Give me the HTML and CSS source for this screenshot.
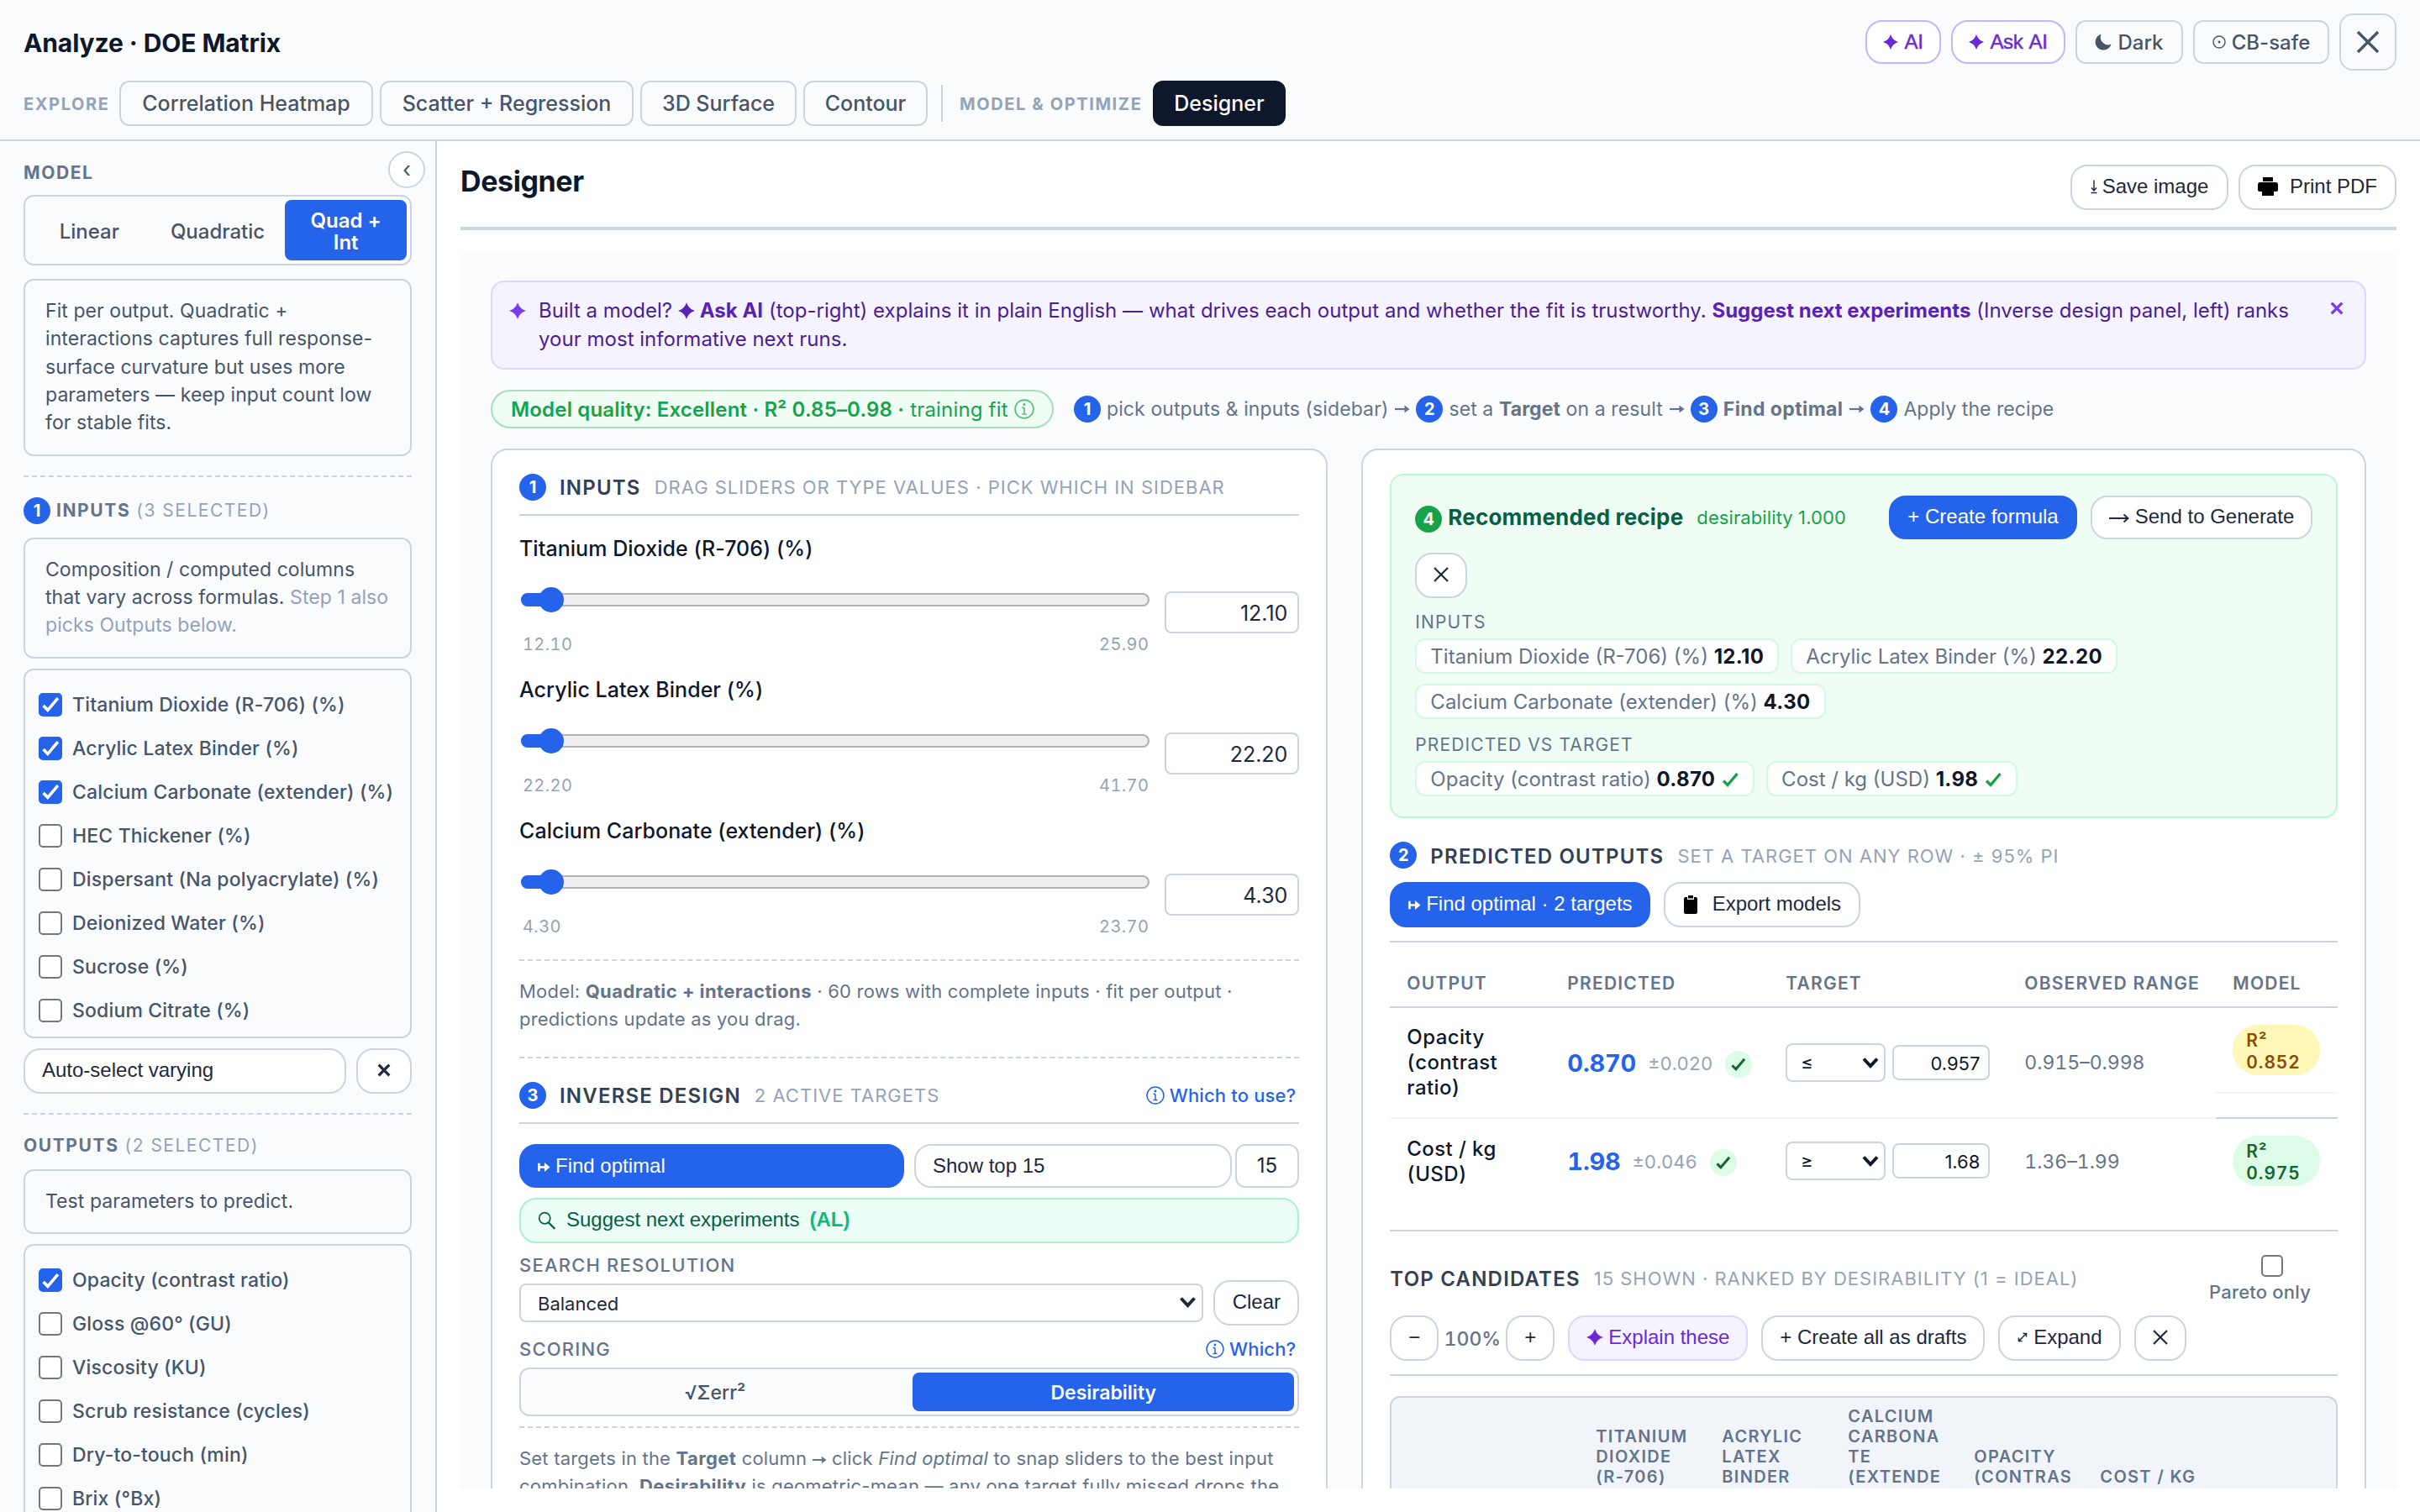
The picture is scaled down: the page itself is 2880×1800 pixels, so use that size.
FILE: index.html
```html
<!DOCTYPE html>
<html lang="en">
<head>
  <meta charset="UTF-8">
  <meta name="viewport" content="width=device-width, initial-scale=1.0">
  <title>Analyze · DOE Matrix</title>
  <link rel="stylesheet" href="styles.css">
</head>
<body>
  <svg class="defs" width="0" height="0">
    <symbol id="star" viewBox="0 0 20 20"><path d="M10 0C11.600 5 14.800 8.400 20 10C14.800 11.600 11.600 15 10 20C8.400 15 5.200 11.600 0 10C5.200 8.400 8.400 5 10 0Z" fill="currentColor"/></symbol>
    <symbol id="cross" viewBox="0 0 20 20"><path d="M2 2L18 18M18 2L2 18" stroke="currentColor" stroke-width="2.200" fill="none"/></symbol>
    <symbol id="cross-bold" viewBox="0 0 20 20"><path d="M3 3L17 17M17 3L3 17" stroke="currentColor" stroke-width="3.600" fill="none"/></symbol>
    <symbol id="moon" viewBox="0 0 20 20"><path d="M7.500 0.800A9.600 9.600 0 1 0 19.500 12.500A9 9 0 0 1 7.500 0.800Z" fill="currentColor"/></symbol>
    <symbol id="dot" viewBox="0 0 20 20"><circle cx="10" cy="10" r="8.800" fill="none" stroke="currentColor" stroke-width="1.800"/><circle cx="10" cy="10" r="1.800" fill="currentColor"/></symbol>
    <symbol id="info" viewBox="0 0 22 22"><circle cx="11" cy="11" r="10" fill="none" stroke="currentColor" stroke-width="1.500"/><path d="M11 9.500V16.500M8.500 9.500H11M8.500 16.500H13.500" stroke="currentColor" stroke-width="1.500" fill="none"/><circle cx="11" cy="6" r="1.400" fill="currentColor"/></symbol>
    <symbol id="arrow" viewBox="0 0 18 12"><path d="M0 6H13" stroke="currentColor" stroke-width="2.200"/><path d="M11.500 1.500L17.500 6L11.500 10.500Z" fill="currentColor"/></symbol>
    <symbol id="arrow-thin" viewBox="0 0 24 14"><path d="M0 7H22M17.500 2.500L22.500 7L17.500 11.500" stroke="currentColor" stroke-width="1.900" fill="none"/></symbol>
    <symbol id="mapsto" viewBox="0 0 16 14"><path d="M1.500 2V12M1.500 7H11" stroke="currentColor" stroke-width="2.800"/><path d="M8.500 1L15.500 7L8.500 13Z" fill="currentColor"/></symbol>
    <symbol id="down" viewBox="0 0 8 16"><path d="M4 0V12M1 9L4 12.500L7 9M0.500 15H7.500" stroke="currentColor" stroke-width="1.400" fill="none"/></symbol>
    <symbol id="printer" viewBox="0 0 24 22"><path d="M6 0H18V5H6ZM3 6H21Q24 6 24 9V15Q24 17 22 17H19V22H5V17H2Q0 17 0 15V9Q0 6 3 6Z" fill="#000"/></symbol>
    <symbol id="clipboard" viewBox="0 0 16 22"><path d="M2 2H4V5H12V2H14Q16 2 16 4V20Q16 22 14 22H2Q0 22 0 20V4Q0 2 2 2ZM5 0H11V3.500H5Z" fill="#000"/></symbol>
    <symbol id="lens" viewBox="0 0 20 20"><circle cx="7.500" cy="7.500" r="6" fill="none" stroke="currentColor" stroke-width="1.500"/><path d="M11.500 12L18.500 19" stroke="currentColor" stroke-width="2"/></symbol>
    <symbol id="chev" viewBox="0 0 20 14"><path d="M2 2.500L10 11L18 2.500" stroke="currentColor" stroke-width="4" fill="none"/></symbol>
    <symbol id="check" viewBox="0 0 20 18"><path d="M1.500 10.500L6.500 15.500L18 2" stroke="currentColor" stroke-width="3.400" fill="none"/></symbol>
    <symbol id="expand" viewBox="0 0 12 12"><path d="M2 10L10 2M6.500 1.500H10.500V5.500M1.500 6.500V10.500H5.500" stroke="currentColor" stroke-width="1.500" fill="none"/></symbol>
  </svg>

  <header class="header">
    <div class="header-top">
      <h1>Analyze · DOE Matrix</h1>
      <div class="header-actions">
        <button class="ai ai-short"><svg><use href="#star"/></svg>AI</button>
        <button class="ai ai-ask"><svg><use href="#star"/></svg>Ask AI</button>
        <button class="tool tool-dark"><svg class="moon"><use href="#moon"/></svg>Dark</button>
        <button class="tool tool-cb"><svg class="dot"><use href="#dot"/></svg>CB-safe</button>
        <button class="close"><svg><use href="#cross"/></svg></button>
      </div>
    </div>
    <nav class="tabs">
      <span class="group g1">Explore</span>
      <button class="tab t1">Correlation Heatmap</button>
      <button class="tab t2">Scatter + Regression</button>
      <button class="tab t3">3D Surface</button>
      <button class="tab t4">Contour</button>
      <span class="sep"></span>
      <span class="group g2">Model &amp; Optimize</span>
      <button class="tab t5 active">Designer</button>
    </nav>
  </header>

  <div class="layout">
    <aside class="sidebar">
      <button class="collapse">‹</button>
      <div class="side-title model-title">Model</div>
      <div class="seg seg-model">
        <span>Linear</span>
        <span>Quadratic</span>
        <span class="on">Quad +<br>Int</span>
      </div>
      <div class="hint">Fit per output. Quadratic +<br>interactions captures full response-<br>surface curvature but uses more<br>parameters — keep input count low<br>for stable fits.</div>
      <hr class="dash">
      <div class="side-title side-inputs"><i class="num">1</i>Inputs <small>(3 selected)</small></div>
      <div class="hint">Composition / computed columns<br>that vary across formulas. <em>Step 1 also<br>picks Outputs below.</em></div>
      <div class="checks">
        <label><i class="cb on"><svg><use href="#check"/></svg></i>Titanium Dioxide (R-706) (%)</label>
        <label><i class="cb on"><svg><use href="#check"/></svg></i>Acrylic Latex Binder (%)</label>
        <label><i class="cb on"><svg><use href="#check"/></svg></i>Calcium Carbonate (extender) (%)</label>
        <label><i class="cb"></i>HEC Thickener (%)</label>
        <label><i class="cb"></i>Dispersant (Na polyacrylate) (%)</label>
        <label><i class="cb"></i>Deionized Water (%)</label>
        <label><i class="cb"></i>Sucrose (%)</label>
        <label><i class="cb"></i>Sodium Citrate (%)</label>
      </div>
      <div class="side-row">
        <button class="btn auto">Auto-select varying</button>
        <button class="btn x"><svg class="x14"><use href="#cross-bold"/></svg></button>
      </div>
      <hr class="dash">
      <div class="side-title side-outputs">Outputs <small>(2 selected)</small></div>
      <div class="hint">Test parameters to predict.</div>
      <div class="checks">
        <label><i class="cb on"><svg><use href="#check"/></svg></i>Opacity (contrast ratio)</label>
        <label><i class="cb"></i>Gloss @60° (GU)</label>
        <label><i class="cb"></i>Viscosity (KU)</label>
        <label><i class="cb"></i>Scrub resistance (cycles)</label>
        <label><i class="cb"></i>Dry-to-touch (min)</label>
        <label><i class="cb"></i>Brix (°Bx)</label>
      </div>
    </aside>

    <main class="main">
      <div class="main-head">
        <h2>Designer</h2>
        <div class="main-actions">
          <button class="btn save"><svg class="down"><use href="#down"/></svg>Save image</button>
          <button class="btn print"><svg class="printer"><use href="#printer"/></svg>Print PDF</button>
        </div>
      </div>

      <div class="panel">
        <div class="banner">
          <svg class="star"><use href="#star"/></svg>
          <p>Built a model? <b><svg><use href="#star"/></svg> Ask AI</b> (top-right) explains it in plain English — what drives each output and whether the fit is trustworthy. <b>Suggest next experiments</b> (Inverse design panel, left) ranks<br>your most informative next runs.</p>
          <svg class="dismiss"><use href="#cross-bold"/></svg>
        </div>

        <div class="status">
          <span class="quality"><b>Model quality: Excellent · R² 0.85–0.98 ·</b> training fit <svg><use href="#info"/></svg></span>
          <span class="steps">
            <i class="num">1</i><span>pick outputs &amp; inputs (sidebar)</span><svg><use href="#arrow"/></svg>
            <i class="num">2</i><span>set a <b>Target</b> on a result</span><svg><use href="#arrow"/></svg>
            <i class="num">3</i><b class="find-step">Find optimal</b><svg><use href="#arrow"/></svg>
            <i class="num">4</i><span class="last">Apply the recipe</span>
          </span>
        </div>

        <div class="cards">
          <section class="card">
            <div class="sec-head">
              <i class="num">1</i><h3>Inputs</h3><span class="sub">Drag sliders or type values · Pick which in sidebar</span>
            </div>
            <div class="slider">
              <div class="name">Titanium Dioxide (R-706) (%)</div>
              <div class="slide-row">
                <div class="range"><div class="track"><span class="fill"></span><span class="thumb"></span></div><div class="ends"><span>12.10</span><span>25.90</span></div></div>
                <div class="value">12.10</div>
              </div>
            </div>
            <div class="slider">
              <div class="name">Acrylic Latex Binder (%)</div>
              <div class="slide-row">
                <div class="range"><div class="track"><span class="fill"></span><span class="thumb"></span></div><div class="ends"><span>22.20</span><span>41.70</span></div></div>
                <div class="value">22.20</div>
              </div>
            </div>
            <div class="slider">
              <div class="name">Calcium Carbonate (extender) (%)</div>
              <div class="slide-row">
                <div class="range"><div class="track"><span class="fill"></span><span class="thumb"></span></div><div class="ends"><span>4.30</span><span>23.70</span></div></div>
                <div class="value">4.30</div>
              </div>
            </div>
            <p class="note note-model">Model: <b>Quadratic + interactions</b> · 60 rows with complete inputs · fit per output ·<br>predictions update as you drag.</p>

            <div class="sec-head inverse">
              <i class="num">3</i><h3>Inverse design</h3><span class="sub">2 active targets</span>
              <a class="which"><svg><use href="#info"/></svg>Which to use?</a>
            </div>
            <div class="opt-row">
              <button class="btn primary find"><svg class="mapsto"><use href="#mapsto"/></svg>Find optimal</button>
              <button class="btn show">Show top 15</button>
              <div class="count">15</div>
            </div>
            <button class="btn suggest"><svg class="lens"><use href="#lens"/></svg>Suggest next experiments <b>(AL)</b></button>
            <div class="field-label search-label">Search resolution</div>
            <div class="res-row">
              <div class="select">Balanced<svg><use href="#chev"/></svg></div>
              <button class="btn clear">Clear</button>
            </div>
            <div class="field-label score-label">Scoring<a class="which"><svg><use href="#info"/></svg>Which?</a></div>
            <div class="seg seg-score"><span>√Σerr²</span><span class="on">Desirability</span></div>
            <p class="note note-last">Set targets in the <b>Target</b> column <svg><use href="#arrow"/></svg> click <em>Find optimal</em> to snap sliders to the best input<br>combination. <b>Desirability</b> is geometric-mean — any one target fully missed drops the</p>
          </section>

          <section class="card">
            <div class="recipe">
              <div class="recipe-head">
                <i class="num green">4</i><b class="rec">Recommended recipe</b><span class="des">desirability 1.000</span>
                <button class="btn primary create">+ Create formula</button>
                <button class="btn send"><svg class="arrow-thin"><use href="#arrow-thin"/></svg>Send to Generate</button>
              </div>
              <button class="btn x62"><svg class="x18"><use href="#cross"/></svg></button>
              <div class="mini mini-in">Inputs</div>
              <div class="chips">
                <span>Titanium Dioxide (R-706) (%) <b>12.10</b></span>
                <span>Acrylic Latex Binder (%) <b>22.20</b></span>
                <span>Calcium Carbonate (extender) (%) <b>4.30</b></span>
              </div>
              <div class="mini mini-pred">Predicted vs target</div>
              <div class="chips">
                <span>Opacity (contrast ratio) <b>0.870</b> <svg><use href="#check"/></svg></span>
                <span>Cost / kg (USD) <b>1.98</b> <svg><use href="#check"/></svg></span>
              </div>
            </div>

            <div class="pred-head">
              <div class="pred-title"><i class="num">2</i><h3>Predicted outputs</h3><span class="sub">Set a target on any row · ± 95% PI</span></div>
              <div class="pred-btns">
                <button class="btn primary find2"><svg class="mapsto"><use href="#mapsto"/></svg>Find optimal · 2 targets</button>
                <button class="btn export"><svg class="clipboard"><use href="#clipboard"/></svg>Export models</button>
              </div>
            </div>

            <table class="outputs">
              <colgroup><col class="c1"><col class="c2"><col class="c3"><col class="c4"><col class="c5"></colgroup>
              <tr><th>Output</th><th>Predicted</th><th>Target</th><th>Observed range</th><th>Model</th></tr>
              <tr class="r1">
                <td class="out">Opacity<br>(contrast<br>ratio)</td>
                <td><div class="pred"><b>0.870</b><span>±0.020</span><i><svg><use href="#check"/></svg></i></div></td>
                <td><div class="target"><span class="op">≤<svg><use href="#chev"/></svg></span><span class="tv">0.957</span></div></td>
                <td class="obs">0.915–0.998</td>
                <td class="mod"><div class="modcell"><span class="r2 yellow">R²<br>0.852</span></div></td>
              </tr>
              <tr class="r2row">
                <td class="out">Cost / kg<br>(USD)</td>
                <td><div class="pred"><b>1.98</b><span>±0.046</span><i><svg><use href="#check"/></svg></i></div></td>
                <td><div class="target"><span class="op">≥<svg><use href="#chev"/></svg></span><span class="tv">1.68</span></div></td>
                <td class="obs">1.36–1.99</td>
                <td class="mod"><div class="modcell"><span class="r2 lime">R²<br>0.975</span></div></td>
              </tr>
            </table>

            <div class="cand-head">
              <div class="cand-title">
                <h3>Top candidates</h3><span class="sub">15 shown · Ranked by desirability (1 = ideal)</span>
                <label class="pareto"><i class="cb"></i>Pareto only</label>
              </div>
              <div class="cand-btns">
                <button class="btn zoom">−</button>
                <span class="pct">100%</span>
                <button class="btn zoom plus">+</button>
                <button class="btn explain"><svg class="star"><use href="#star"/></svg>Explain these</button>
                <button class="btn drafts">+ Create all as drafts</button>
                <button class="btn exp"><svg class="expand"><use href="#expand"/></svg>Expand</button>
                <button class="btn x62"><svg class="x18"><use href="#cross"/></svg></button>
              </div>
            </div>
            <div class="cand-table">
              <span></span>
              <span>Titanium<br>Dioxide<br>(R-706)<br>(%)</span>
              <span>Acrylic<br>Latex<br>Binder<br>(%)</span>
              <span>Calcium<br>Carbona<br>te<br>(extende<br>r) (%)</span>
              <span>Opacity<br>(contras<br>t ratio)</span>
              <span>Cost / kg<br>(USD)</span>
            </div>
          </section>
        </div>
      </div>
    </main>
  </div>
</body>
</html>
```

FILE: styles.css
```css
* {
  box-sizing: border-box;
}
body, html {
  margin: 0;
  height: 1800px;
  overflow: hidden;
}
body {
  display: flex;
  flex-direction: column;
  background: #fff;
  color: #0f172a;
  font-family: Inter, "Liberation Sans", sans-serif;
  font-size: 24px;
}
h1, h2, h3, p {
  margin: 0;
}
button {
  font-family: inherit;
  padding: 0;
  margin: 0;
  white-space: nowrap;
}
i {
  font-style: normal;
}
svg {
  flex: none;
}
.defs {
  position: absolute;
}

/* header */
.header {
  height: 168px;
  background: #f9fbfd;
  border-bottom: 2px solid #cbd5e1;
  padding: 16px 28px 0;
}
.header-top {
  display: flex;
  align-items: center;
  justify-content: space-between;
  height: 68px;
}
h1 {
  padding-top: 2px;
  font-size: 30px;
  font-weight: 700;
  letter-spacing: -.1px;
}
.header-actions {
  display: flex;
  align-items: center;
  gap: 12px;
}
.header-actions button {
  display: flex;
  align-items: center;
  justify-content: center;
  gap: 7px;
  height: 52px;
  font-size: 24px;
  font-weight: 500;
  border: 2px solid #cbd5e1;
  border-radius: 12px;
  background: #f9fbfd;
  color: #475569;
}
.header-actions .ai {
  border-color: #c4b5fd;
  border-radius: 20px;
  background: #fff;
  color: #6d28d9;
  font-family: "Liberation Sans", Arial, sans-serif;
  font-size: 24px;
  letter-spacing: -.3px;
  word-spacing: 2px;
  padding-bottom: 1px;
  -webkit-text-stroke: .5px #6d28d9;
}
.ai svg {
  width: 18px;
  height: 18px;
}
.ai-short { width: 90px; }
.ai-ask { width: 136px; }
.tool-dark { width: 128px; }
.tool-cb { width: 162px; }
.moon {
  width: 20px;
  height: 20px;
}
.dot {
  width: 16px;
  height: 16px;
}
.header-actions .close {
  width: 68px;
  height: 68px;
  border-radius: 16px;
}
.close svg {
  width: 30px;
  height: 30px;
}

.tabs {
  display: flex;
  align-items: center;
  gap: 8px;
  height: 54px;
  margin-top: 12px;
}
.group {
  padding-top: 2px;
  font-size: 20px;
  font-weight: 700;
  letter-spacing: 1.6px;
  text-transform: uppercase;
  color: #94a3b8;
  white-space: nowrap;
}
.g1 { width: 106px; }
.g2 { width: 222px; }
.tab {
  height: 54px;
  border: 2px solid #cbd5e1;
  border-radius: 12px;
  background: #f9fbfd;
  color: #475569;
  font-size: 25px;
  font-weight: 500;
}
.tab.active {
  background: #0f172a;
  border-color: #0f172a;
  color: #fff;
}
.t1 { width: 302px; }
.t2 { width: 302px; }
.t3 { width: 186px; }
.t4 { width: 148px; }
.t5 { width: 158px; }
.sep {
  width: 2px;
  height: 44px;
  margin: 0 12px 0 8px;
  background: #cbd5e1;
}

/* shared bits */
.btn {
  display: flex;
  align-items: center;
  justify-content: center;
  height: 54px;
  padding-bottom: 2px;
  border: 2px solid #cbd5e1;
  border-radius: 20px;
  background: #fff;
  color: #1e293b;
  font-family: "Liberation Sans", Arial, sans-serif;
  font-size: 24px;
}
.btn.primary {
  background: #2563eb;
  border-color: #2563eb;
  color: #fff;
}
.num {
  display: inline-flex;
  align-items: center;
  justify-content: center;
  flex: none;
  width: 32px;
  height: 32px;
  border-radius: 50%;
  background: #2563eb;
  color: #fff;
  font-size: 20px;
  font-weight: 700;
  letter-spacing: 0;
}
.num.green {
  margin-top: 4px;
  background: #16a34a;
}
.dash {
  border: 0;
  border-top: 2px dashed #cbd5e1;
  margin: 23px 0 24px;
}
.cb {
  display: flex;
  align-items: center;
  justify-content: center;
  width: 28px;
  height: 28px;
  border: 2px solid #767676;
  border-radius: 5px;
  background: #fff;
}
.cb.on {
  background: #2563eb;
  border-color: #2563eb;
  color: #fff;
}
.cb svg {
  width: 21px;
  height: 19px;
}
.seg {
  display: grid;
  gap: 8px;
  padding: 4px;
  border: 2px solid #cbd5e1;
  border-radius: 12px;
  background: #f9fbfd;
  color: #475569;
  font-weight: 500;
  text-align: center;
}
.seg span {
  display: flex;
  align-items: center;
  justify-content: center;
  padding-top: 2px;
  border-radius: 8px;
}
.seg .on {
  background: #2563eb;
  color: #fff;
  font-weight: 600;
}

/* sidebar */
.layout {
  display: flex;
  height: 1632px;
}
.sidebar {
  position: relative;
  width: 520px;
  flex: none;
  overflow: hidden;
  padding: 24px 28px 0;
  background: #f9fbfd;
  border-right: 2px solid #cbd5e1;
}
.collapse {
  position: absolute;
  top: 12px;
  left: 462px;
  width: 44px;
  height: 44px;
  border: 2px solid #cbd5e1;
  border-radius: 50%;
  background: #fff;
  color: #475569;
  font-size: 26px;
  line-height: 36px;
}
.side-title {
  display: flex;
  align-items: center;
  gap: 7px;
  font-size: 21px;
  font-weight: 700;
  letter-spacing: 1.6px;
  text-transform: uppercase;
  color: #64748b;
}
.side-title small {
  font-size: 21px;
  font-weight: 400;
  letter-spacing: 1.5px;
  color: #94a3b8;
}
.model-title {
  height: 26px;
  margin-bottom: 14px;
}
.side-inputs {
  height: 32px;
  margin-bottom: 16px;
}
.side-outputs {
  height: 26px;
  margin-bottom: 15px;
}
.seg-model {
  grid-template-columns: repeat(3, 1fr);
  height: 84px;
  margin-bottom: 16px;
  font-size: 24px;
  line-height: 26px;
}
.seg-model span {
  padding-top: 3px;
}
.hint {
  padding: 20px 24px;
  border: 2px solid #cbd5e1;
  border-radius: 12px;
  font-size: 23px;
  line-height: 33.35px;
  letter-spacing: .07px;
  color: #475569;
  white-space: nowrap;
}
.hint em {
  font-style: normal;
  color: #94a3b8;
}
.checks {
  height: 440px;
  overflow: hidden;
  margin-top: 12px;
  padding: 15px 16px 0;
  border: 2px solid #cbd5e1;
  border-radius: 12px;
  color: #475569;
  font-size: 23px;
  font-weight: 500;
  letter-spacing: .16px;
}
.checks label {
  display: flex;
  align-items: center;
  gap: 12px;
  height: 52px;
  white-space: nowrap;
}
.side-row {
  display: flex;
  gap: 12px;
  margin-top: 12px;
}
.auto {
  width: 384px;
  justify-content: flex-start;
  padding-left: 20px;
}
.side-row .x {
  flex: 1;
}
.x14 { width: 18px; height: 18px; }
.x18 { width: 20px; height: 20px; }
.x62 { width: 62px; }

/* main */
.main {
  flex: 1;
  padding: 0 28px;
}
.main-head {
  display: flex;
  align-items: flex-start;
  justify-content: space-between;
  height: 106px;
  padding-top: 28px;
  border-bottom: 4px solid #cbd5e1;
}
h2 {
  font-size: 34px;
  line-height: 40px;
  font-weight: 700;
  letter-spacing: -.4px;
}
.main-actions {
  display: flex;
  gap: 12px;
}
.save { width: 188px; gap: 6px; }
.print { width: 188px; gap: 14px; }
.down { width: 8px; height: 17px; }
.printer { width: 24px; height: 22px; }

.panel {
  height: 1470px;
  overflow: hidden;
  margin-top: 28px;
  padding: 32px 36px 0;
  background: #f9fbfd;
}
.banner {
  display: flex;
  height: 106px;
  padding: 17px 19px 0 20px;
  border: 2px solid #ddd6fe;
  border-radius: 16px;
  background: #f5f3ff;
  color: #4c1d95;
}
.banner p {
  flex: 1;
  font-size: 24px;
  line-height: 34px;
  letter-spacing: .02px;
  white-space: nowrap;
}
.banner b {
  color: #5b21b6;
}
.banner b svg {
  width: 20px;
  height: 20px;
  vertical-align: -2px;
}
.banner .star {
  width: 20px;
  height: 20px;
  margin: 7px 15px 0 0;
  color: #7c3aed;
}
.banner .dismiss {
  width: 18px;
  height: 18px;
  margin: 5px 5px 0 0;
  color: #7c3aed;
}

.status {
  display: flex;
  align-items: center;
  height: 46px;
  margin: 24px 0;
}
.quality {
  display: flex;
  align-items: center;
  gap: 7px;
  width: 670px;
  height: 46px;
  padding-left: 22px;
  margin-right: 24px;
  border: 2px solid #a4dfb8;
  border-radius: 23px;
  background: #f0fdf4;
  color: #16a34a;
  font-size: 24px;
  letter-spacing: .18px;
  white-space: nowrap;
}
.quality b {
  font-weight: 600;
}
.quality svg {
  width: 24px;
  height: 24px;
  opacity: .7;
}
.steps {
  display: flex;
  align-items: center;
  gap: 7px;
  color: #64748b;
  font-size: 23px;
  letter-spacing: .1px;
  white-space: nowrap;
}
.steps .find-step {
  letter-spacing: .4px;
}
.steps .last {
  letter-spacing: .05px;
}
.steps svg {
  width: 18px;
  height: 12px;
  margin: 0 0 0 1px;
}
.steps b {
  font-weight: 700;
}

.cards {
  display: grid;
  grid-template-columns: 1fr 1.2fr;
  gap: 40px;
}
.card {
  min-width: 0;
  height: 1400px;
  padding: 28px 32px;
  border: 2px solid #cbd5e1;
  border-radius: 20px;
  background: #fff;
}
.sec-head {
  display: flex;
  align-items: center;
  height: 50px;
  padding-bottom: 16px;
  border-bottom: 2px solid #cbd5e1;
}
h3 {
  margin-left: 16px;
  font-size: 24px;
  font-weight: 600;
  letter-spacing: 1.2px;
  text-transform: uppercase;
  color: #334155;
  white-space: nowrap;
}
.sub {
  margin-left: 16px;
  font-size: 22px;
  letter-spacing: 1px;
  text-transform: uppercase;
  color: #94a3b8;
  white-space: nowrap;
}
.which {
  display: flex;
  align-items: center;
  gap: 6px;
  margin-left: auto;
  padding-right: 4px;
  font-size: 22px;
  font-weight: 500;
  letter-spacing: .15px;
  text-transform: none;
  color: #2563eb;
}
.which svg {
  width: 22px;
  height: 22px;
}
.slider {
  height: 168px;
  padding-top: 23px;
}
.name {
  height: 32px;
  font-size: 25px;
  line-height: 32px;
  font-weight: 500;
  letter-spacing: .05px;
}
.slide-row {
  display: flex;
  gap: 16px;
  padding-top: 35px;
}
.range {
  flex: 1;
  padding: 2px 2px 0;
}
.track {
  position: relative;
  height: 16px;
  border: 2px solid #b2b2b2;
  border-radius: 8px;
  background: #efefef;
}
.fill {
  position: absolute;
  left: -2px;
  top: -2px;
  width: 40px;
  height: 16px;
  border-radius: 8px;
  background: #2563eb;
}
.thumb {
  position: absolute;
  left: 19px;
  top: -9px;
  width: 30px;
  height: 30px;
  border-radius: 50%;
  background: #2563eb;
}
.ends {
  display: flex;
  justify-content: space-between;
  padding: 0 1px 0 2px;
  margin-top: 32px;
  font-size: 20px;
  font-variant-numeric: tabular-nums;
  line-height: 26px;
  letter-spacing: .4px;
  color: #94a3b8;
}
.value {
  width: 160px;
  height: 50px;
  padding-right: 12px;
  border: 2px solid #cbd5e1;
  border-radius: 8px;
  font-size: 25px;
  line-height: 48px;
  text-align: right;
  color: #1e293b;
}
.note {
  border-top: 2px dashed #cbd5e1;
  font-size: 22px;
  line-height: 33.35px;
  letter-spacing: .2px;
  color: #64748b;
  white-space: nowrap;
}
.note b {
  letter-spacing: .4px;
}
.note-model {
  height: 118px;
  margin-top: 24px;
  padding-top: 20px;
  border-bottom: 2px dashed #cbd5e1;
}
.note-last {
  margin-top: 12px;
  padding-top: 20px;
}
.note svg {
  width: 17px;
  height: 12px;
}
.inverse {
  margin-top: 28px;
}
.opt-row {
  display: flex;
  gap: 12px;
  margin-top: 24px;
}
.opt-row .btn {
  height: 52px;
  justify-content: flex-start;
  padding: 0 0 0 20px;
}
.opt-row .find {
  width: 458px;
}
.opt-row .show {
  width: 378px;
}
.count {
  width: 76px;
  margin-left: -8px;
  border: 2px solid #cbd5e1;
  border-radius: 12px;
  font-size: 24px;
  line-height: 48px;
  text-align: center;
  color: #1e293b;
}
.mapsto {
  width: 15px;
  height: 13px;
  margin: 2px 6px 0 0;
}
.suggest {
  width: 100%;
  margin-top: 12px;
  justify-content: flex-start;
  padding-left: 20px;
  border-color: #a7f3d0;
  background: #ecfdf5;
  color: #065f46;
}
.suggest b {
  margin-left: 12px;
  color: #10b981;
}
.lens {
  width: 22px;
  height: 22px;
  margin: 2px 12px 0 0;
}
.field-label {
  display: flex;
  align-items: center;
  height: 28px;
  font-size: 22px;
  font-weight: 500;
  letter-spacing: 1.2px;
  text-transform: uppercase;
  color: #64748b;
}
.search-label {
  margin: 12px 0 4px;
}
.res-row {
  display: flex;
  align-items: center;
  gap: 12px;
}
.select {
  display: flex;
  flex: 1;
  align-items: center;
  justify-content: space-between;
  height: 46px;
  padding: 1px 6px 0 20px;
  border: 2px solid #cbd5e1;
  border-radius: 8px;
  color: #1e293b;
  font-size: 22px;
}
.select svg {
  width: 21px;
  height: 14px;
  margin-bottom: 3px;
}
.clear {
  width: 102px;
}
.score-label {
  margin: 14px 0 8px;
}
.seg-score {
  grid-template-columns: 1fr 1fr;
  height: 58px;
  font-size: 23px;
}

/* recipe */
.recipe {
  height: 410px;
  padding: 24px 28px;
  border: 2px solid #bbf7d0;
  border-radius: 16px;
  background: #f0fdf4;
}
.recipe-head {
  display: flex;
  align-items: center;
  height: 52px;
  margin-bottom: 16px;
}
.recipe-head .btn {
  height: 52px;
}
.rec {
  margin-left: 7px;
  padding-bottom: 1px;
  font-size: 26px;
  letter-spacing: .18px;
  color: #065f46;
}
.des {
  margin-left: 16px;
  font-size: 22px;
  letter-spacing: .1px;
  color: #16a34a;
}
.create {
  width: 224px;
  margin-left: auto;
}
.send {
  width: 264px;
  margin-left: 16px;
}
.arrow-thin {
  width: 24px;
  height: 14px;
  margin: 3px 7px 0 0;
}
.mini {
  height: 26px;
  font-size: 21px;
  line-height: 26px;
  letter-spacing: 1.1px;
  text-transform: uppercase;
  color: #64748b;
}
.mini-in {
  margin: 16px 0 6px;
}
.mini-pred {
  margin: 18px 0 6px;
}
.chips {
  display: flex;
  flex-wrap: wrap;
  gap: 12px 14px;
}
.chips span {
  height: 42px;
  padding: 1px 16px 0;
  border: 2px solid #d1fae5;
  border-radius: 12px;
  background: #fff;
  font-size: 24px;
  line-height: 38px;
  color: #64748b;
  white-space: nowrap;
}
.chips b {
  color: #0f172a;
  letter-spacing: .35px;
}
.chips svg {
  width: 21px;
  height: 18px;
  margin-left: 1px;
  vertical-align: -1px;
  color: #16a34a;
}

/* predicted outputs */
.pred-head {
  height: 148px;
  padding-top: 28px;
  border-bottom: 2px solid #cbd5e1;
}
.pred-title {
  display: flex;
  align-items: center;
  height: 32px;
}
.pred-title h3, .pred-title .sub {
  padding-top: 2px;
}
.pred-btns {
  display: flex;
  gap: 16px;
  margin-top: 16px;
}
.find2 { width: 310px; }
.export { width: 234px; }
.clipboard {
  width: 16px;
  height: 22px;
  margin: 2px 18px 0 0;
}
.outputs {
  width: 100%;
  table-layout: fixed;
  border-collapse: separate;
  border-spacing: 0;
  font-variant-numeric: tabular-nums;
}
.c1 { width: 191px; }
.c2 { width: 260px; }
.c3 { width: 284px; }
.c4 { width: 248px; }
.c5 { width: 145px; }
.outputs th {
  height: 78px;
  padding: 20px 20px 0;
  border-bottom: 2px solid #cbd5e1;
  font-size: 21px;
  font-weight: 600;
  letter-spacing: 1.2px;
  text-align: left;
  text-transform: uppercase;
  color: #64748b;
  white-space: nowrap;
}
.outputs td {
  padding: 0 20px;
}
.r1 td {
  height: 132px;
  border-bottom: 2px solid #f1f5f9;
}
.r2row td {
  height: 102px;
}
.outputs .out {
  font-size: 24px;
  font-weight: 500;
  line-height: 30px;
  letter-spacing: .4px;
}
.pred {
  display: flex;
  align-items: center;
}
.pred b {
  font-size: 29px;
  font-weight: 700;
  letter-spacing: -.2px;
  color: #2563eb;
}
.pred span {
  margin-left: 14px;
  padding-top: 2px;
  font-size: 22px;
  color: #94a3b8;
}
.pred i {
  display: flex;
  align-items: center;
  justify-content: center;
  width: 32px;
  height: 32px;
  margin: 3px 0 0 15px;
  border-radius: 50%;
  background: #dcfce7;
  color: #166534;
}
.pred svg {
  width: 18px;
  height: 16px;
}
.target {
  display: flex;
  align-items: center;
  gap: 8px;
}
.op {
  display: flex;
  align-items: center;
  justify-content: space-between;
  width: 119px;
  height: 46px;
  padding: 0 6px 0 16px;
  border: 2px solid #cbd5e1;
  border-radius: 8px;
  font-size: 22px;
}
.op svg {
  width: 20px;
  height: 14px;
}
.tv {
  width: 116px;
  height: 42px;
  padding-right: 10px;
  border: 2px solid #cbd5e1;
  border-radius: 8px;
  font-size: 22px;
  font-variant-numeric: normal;
  line-height: 40px;
  text-align: right;
}
.r2row .pred, .r2row .target {
  margin-top: -2px;
}
.outputs .obs {
  font-size: 23px;
  color: #64748b;
}
.outputs .mod {
  padding: 0;
  vertical-align: top;
}
.r1 .mod {
  border-bottom-color: #cbd5e1;
}
.modcell {
  height: 102px;
  padding: 20px;
}
.r1 .modcell {
  border-bottom: 2px solid #f1f5f9;
}
.r2 {
  display: block;
  width: 104px;
  height: 60px;
  padding: 6px 0 0 16px;
  border-radius: 30px;
  font-size: 21px;
  font-weight: 600;
  letter-spacing: .9px;
  line-height: 26px;
}
.yellow {
  background: #fef7b8;
  color: #854d0e;
}
.lime {
  background: #dcfce7;
  color: #166534;
}

/* candidates */
.cand-head {
  height: 174px;
  margin-top: 30px;
  border-top: 2px solid #cbd5e1;
  border-bottom: 2px solid #cbd5e1;
}
.cand-title {
  display: flex;
  align-items: center;
  height: 100px;
  padding-top: 12px;
}
.cand-title h3 {
  margin-left: 0;
}
.pareto {
  display: flex;
  flex-direction: column;
  align-items: center;
  gap: 5px;
  margin: 0 32px 0 auto;
  font-size: 22px;
  font-weight: 500;
  letter-spacing: .2px;
  color: #64748b;
}
.pareto .cb {
  width: 26px;
  height: 26px;
  margin-left: 30px;
}
.cand-btns {
  display: flex;
  align-items: center;
  gap: 16px;
}
.zoom {
  width: 58px;
}
.pct {
  width: 68px;
  margin: 0 -10px;
  padding-top: 2px;
  font-size: 23px;
  font-weight: 500;
  font-variant-numeric: tabular-nums;
  text-align: center;
  color: #64748b;
}
.explain {
  width: 214px;
  gap: 6px;
  border-color: #ddd6fe;
  background: #f5f3ff;
  color: #6d28d9;
}
.explain .star {
  width: 20px;
  height: 20px;
}
.drafts { width: 266px; }
.exp { width: 146px; gap: 7px; }
.expand {
  width: 12px;
  height: 12px;
}
.cand-table {
  display: grid;
  grid-template-columns: 225px repeat(5, 150px);
  align-items: end;
  height: 280px;
  margin-top: 24px;
  padding: 10px 0 149px 18px;
  border: 2px solid #cbd5e1;
  border-radius: 12px;
  background: #f1f5f9;
  font-size: 20px;
  font-weight: 600;
  line-height: 24px;
  letter-spacing: 1.3px;
  text-transform: uppercase;
  color: #64748b;
  white-space: nowrap;
}
```
